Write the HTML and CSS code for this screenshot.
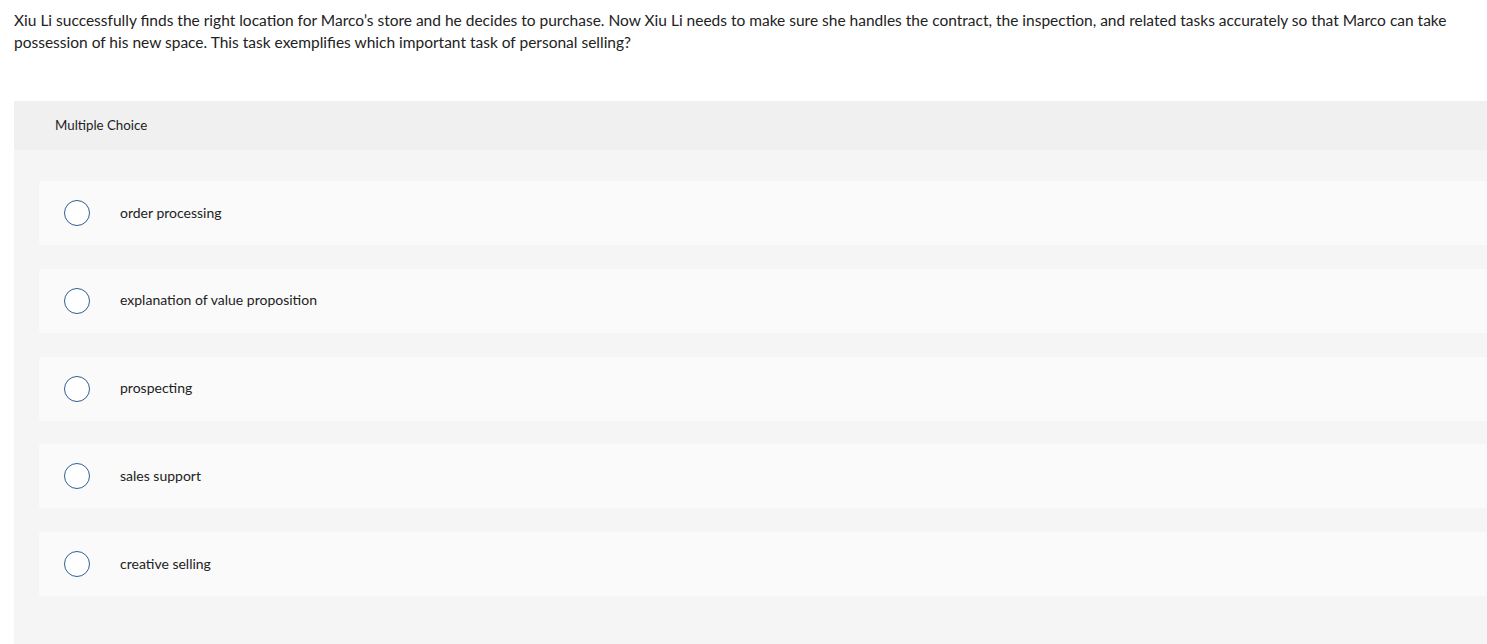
FILE: index.html
```html
<!DOCTYPE html>
<html>
<head>
<meta charset="utf-8">
<link rel="stylesheet" href="styles.css">
</head>
<body>
<div class="question">Xiu Li successfully finds the right location for Marco’s store and he decides to purchase. Now Xiu Li needs to make sure she handles the contract, the inspection, and related tasks accurately so that Marco can take possession of his new space. This task exemplifies which important task of personal selling?</div>
<div class="panel">
  <div class="panel-header">Multiple Choice</div>
  <div class="options">
    <div class="option"><span class="radio"></span><span class="label">order processing</span></div>
    <div class="option"><span class="radio"></span><span class="label">explanation of value proposition</span></div>
    <div class="option"><span class="radio"></span><span class="label">prospecting</span></div>
    <div class="option"><span class="radio"></span><span class="label">sales support</span></div>
    <div class="option"><span class="radio"></span><span class="label">creative selling</span></div>
  </div>
</div>
</body>
</html>
```
FILE: styles.css
```css
html, body {
  margin: 0;
  padding: 0;
  background: #ffffff;
  font-family: "Lato", "Open Sans", sans-serif;
  color: #222222;
}
.question {
  padding: 9px 14px 0 14px;
  font-size: 15.5px;
  line-height: 22px;
}
.panel {
  margin: 48px 0 0 14px;
  background: #f5f5f5;
  padding-bottom: 48px;
}
.panel-header {
  background: #f0f0f0;
  height: 49px;
  display: flex;
  align-items: center;
  padding-left: 41px;
  padding-bottom: 1px;
  box-sizing: border-box;
  font-size: 13.3px;
}
.options {
  padding: 31px 0 0 25px;
  display: flex;
  flex-direction: column;
  gap: 23.75px;
}
.option {
  background: #fafafa;
  height: 64px;
  border-radius: 3px 0 0 3px;
  display: flex;
  align-items: center;
  padding-left: 25px;
}
.radio {
  width: 24px;
  height: 24px;
  border: 1.5px solid #2d5f93;
  border-radius: 50%;
  background: #ffffff;
  flex: none;
}
.label {
  margin-left: 30px;
  font-size: 14px;
  padding-bottom: 2px;
}
```
